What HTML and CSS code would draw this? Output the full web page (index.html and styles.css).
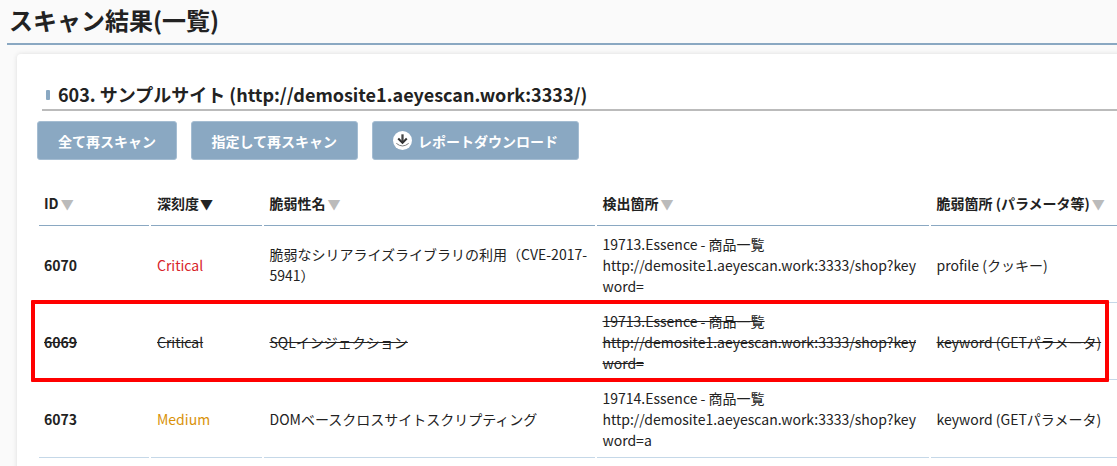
FILE: index.html
```html
<!DOCTYPE html>
<html lang="ja">
<head>
<meta charset="utf-8">
<title>スキャン結果(一覧)</title>
<link rel="stylesheet" href="styles.css">
</head>
<body>
<h1 class="page-title">スキャン結果(一覧)</h1>
<main class="card">
  <h2 class="site-title"><span class="site-mark"></span>603. サンプルサイト (http://demosite1.aeyescan.work:3333/)</h2>
  <div class="actions">
    <button class="btn">全て再スキャン</button>
    <button class="btn">指定して再スキャン</button>
    <button class="btn">
      <svg class="dl-icon" viewBox="0 0 20 20" width="19" height="19" aria-hidden="true">
        <circle cx="10" cy="10" r="10" fill="#fff"/>
        <path d="M10 3.5V11.5" fill="none" stroke="#444" stroke-width="2.4"/>
        <path d="M5.5 8 10 12.5 14.5 8" fill="none" stroke="#333" stroke-width="2.2"/>
        <path d="M3.5 13 Q10 18.5 16.5 13" fill="none" stroke="#777" stroke-width="1"/>
      </svg>レポートダウンロード</button>
  </div>
  <table class="results">
    <colgroup>
      <col class="c-id"><col class="c-sev"><col class="c-name"><col class="c-loc"><col class="c-param">
    </colgroup>
    <thead>
      <tr>
        <th>ID<span class="sort">▼</span></th>
        <th>深刻度<span class="sort active">▼</span></th>
        <th>脆弱性名<span class="sort">▼</span></th>
        <th>検出箇所<span class="sort">▼</span></th>
        <th>脆弱箇所 (パラメータ等)<span class="sort">▼</span></th>
      </tr>
    </thead>
    <tbody>
      <tr>
        <td class="id">6070</td>
        <td class="critical">Critical</td>
        <td>脆弱なシリアライズライブラリの利用（CVE-2017-5941）</td>
        <td class="loc">19713.Essence - 商品一覧<br>http://demosite1.aeyescan.work:3333/shop?keyword=</td>
        <td>profile (クッキー)</td>
      </tr>
      <tr class="struck">
        <td class="id">6069</td>
        <td>Critical</td>
        <td>SQLインジェクション</td>
        <td class="loc">19713.Essence - 商品一覧<br>http://demosite1.aeyescan.work:3333/shop?keyword=</td>
        <td>keyword (GETパラメータ)</td>
      </tr>
      <tr class="last">
        <td class="id">6073</td>
        <td class="medium">Medium</td>
        <td>DOMベースクロスサイトスクリプティング</td>
        <td class="loc">19714.Essence - 商品一覧<br>http://demosite1.aeyescan.work:3333/shop?keyword=a</td>
        <td>keyword (GETパラメータ)</td>
      </tr>
    </tbody>
  </table>
</main>
<div class="highlight"></div>
</body>
</html>
```
FILE: styles.css
```css
html, body {
  margin: 0;
  height: 466px;
  overflow: hidden;
}
body {
  position: relative;
  width: 1117px;
  background: #fafafa;
  color: #222;
  font-family: "Noto Sans CJK JP", "Noto Sans", sans-serif;
  font-size: 14px;
  line-height: 21px;
}
.page-title {
  margin: 0 0 9px 7px;
  padding: 2px 0 0 2px;
  height: 41px;
  border-bottom: 2px solid #8aa8c2;
  font-size: 24px;
  line-height: 36px;
  font-weight: 700;
  color: #222;
}
.card {
  margin-left: 17px;
  width: 1140px;
  height: 420px;
  padding: 26px 0 0 20px;
  box-sizing: border-box;
  background: #fff;
  border-radius: 4px;
  box-shadow: 0 0 5px rgba(0, 0, 0, 0.12);
}
.site-title {
  display: flex;
  align-items: center;
  margin: 0 0 10px 5px;
  padding: 0 0 0 4px;
  height: 29px;
  border-bottom: 2px solid #bbb;
  font-size: 18px;
  line-height: 29px;
  font-weight: 700;
}
.site-mark {
  width: 4px;
  height: 10px;
  margin-right: 8px;
  background: #8aa8c2;
  border-radius: 1px;
}
.actions {
  display: flex;
  gap: 13.5px;
  margin-bottom: 25px;
}
.btn {
  display: flex;
  align-items: center;
  height: 39px;
  padding: 0 20px;
  border: 1px solid #a5bdd2;
  border-radius: 3px;
  background: #8aa8c2;
  color: #fff;
  font-family: inherit;
  font-size: 14px;
  font-weight: 700;
}
.dl-icon {
  margin-right: 6.5px;
}
.results {
  table-layout: fixed;
  width: 1084px;
  border-collapse: separate;
  border-spacing: 2px;
}
.c-id { width: 110px; }
.c-sev { width: 111px; }
.c-name { width: 331px; }
.c-loc { width: 332px; }
.c-param { width: 188px; }
th {
  padding: 6px 5.5px 11px;
  border-bottom: 1px solid #8aa8c2;
  text-align: left;
  font-weight: 700;
  white-space: nowrap;
  font-size: 14px;
}
td {
  padding: 5.5px;
  border-bottom: 1px solid #c5d8e8;
  vertical-align: middle;
}
th:first-child, td:first-child {
  padding-left: 5px;
}
th:nth-child(2), td:nth-child(2) {
  padding-left: 6px;
}
.last td {
  padding-bottom: 6.5px;
}
.sort {
  margin-left: 2px;
  color: #bbb;
  font-size: 13px;
}
.sort.active {
  margin-left: 1px;
  color: #222;
}
.id {
  font-weight: 700;
}
.critical {
  color: #d8232a;
}
.medium {
  color: #d9920a;
}
.loc {
  word-break: break-all;
}
.struck td {
  text-decoration: line-through;
}
.highlight {
  position: absolute;
  left: 31px;
  top: 300px;
  width: 1070px;
  height: 74px;
  border: 4px solid #f00;
  border-radius: 1px;
}
```
